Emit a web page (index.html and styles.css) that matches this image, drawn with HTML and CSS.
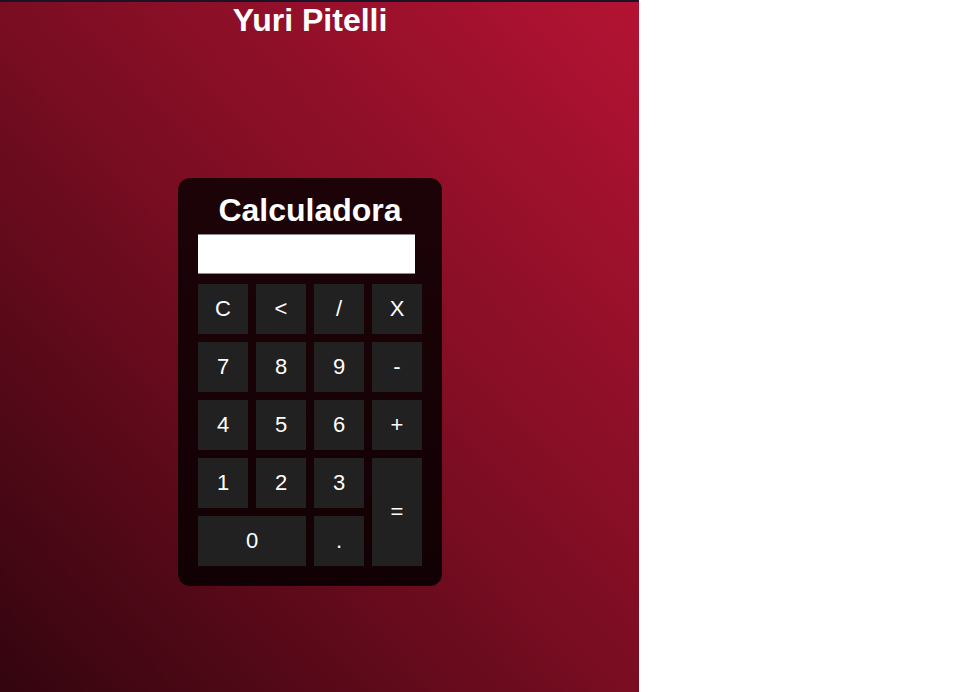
FILE: index.html
```html
<!DOCTYPE html>
<html lang="pt">
<head>
<meta charset="utf-8">
<title>Calculadora</title>
<link rel="stylesheet" href="styles.css">
</head>
<body>
<main class="page">
  <div class="column">
    <h1 class="author">Yuri Pitelli</h1>
    <section class="calc">
      <h2 class="calc-title">Calculadora</h2>
      <div class="display"></div>
      <div class="keys">
        <button class="key">C</button>
        <button class="key">&lt;</button>
        <button class="key">/</button>
        <button class="key">X</button>
        <button class="key">7</button>
        <button class="key">8</button>
        <button class="key">9</button>
        <button class="key">-</button>
        <button class="key">4</button>
        <button class="key">5</button>
        <button class="key">6</button>
        <button class="key">+</button>
        <button class="key">1</button>
        <button class="key">2</button>
        <button class="key">3</button>
        <button class="key key-eq">=</button>
        <button class="key key-zero">0</button>
        <button class="key">.</button>
      </div>
    </section>
  </div>
</main>
</body>
</html>
```

FILE: styles.css
```css
html, body {
  margin: 0;
  padding: 0;
  background: #ffffff;
}

body {
  font-family: "Liberation Sans", Arial, sans-serif;
}

.page {
  width: 639px;
  height: 690px;
  border-top: 2px solid #1b1129;
  background: linear-gradient(to top right, #33050e 0%, #7a0d22 50%, #b41333 100%);
}

.column {
  width: 620px;
  display: flex;
  flex-direction: column;
  align-items: center;
}

.author {
  margin: 0;
  font-size: 32px;
  line-height: 36px;
  font-weight: bold;
  color: #ffffff;
}

.calc {
  margin-top: 140px;
  width: 224px;
  padding: 14px 20px 20px;
  border-radius: 12px;
  background: linear-gradient(to bottom, #1c0308, #120104);
  display: flex;
  flex-direction: column;
  align-items: center;
}

.calc-title {
  margin: 0;
  font-size: 32px;
  line-height: 37px;
  font-weight: bold;
  color: #ffffff;
}

.display {
  align-self: flex-start;
  margin-top: 5px;
  width: 217px;
  height: 38px;
  background: #ffffff;
  border-top: 1px solid #8f8a8c;
  border-bottom: 1px solid #8f8a8c;
}

.keys {
  margin-top: 10px;
  display: grid;
  grid-template-columns: repeat(4, 50px);
  grid-auto-rows: 50px;
  gap: 8px;
}

.key {
  margin: 0;
  padding: 0;
  border: none;
  background: #212121;
  color: #ffffff;
  font-family: "Liberation Sans", Arial, sans-serif;
  font-size: 22px;
  display: flex;
  align-items: center;
  justify-content: center;
}

.key-eq {
  grid-column: 4;
  grid-row: 4 / span 2;
}

.key-zero {
  grid-column: 1 / span 2;
}
```
